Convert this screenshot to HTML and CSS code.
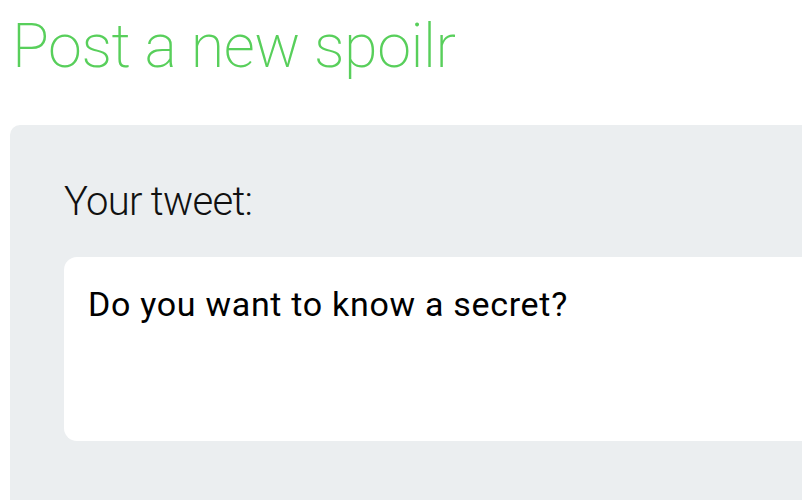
FILE: index.html
```html
<!DOCTYPE html>
<html lang="en">
<head>
<meta charset="utf-8">
<title>Post a new spoilr</title>
<link rel="stylesheet" href="styles.css">
</head>
<body>
  <h1 class="title">Post a new spoilr</h1>
  <form class="panel">
    <label class="label" for="tweet">Your tweet:</label>
    <div class="tweet" id="tweet">Do you want to know a secret?</div>
  </form>
</body>
</html>
```

FILE: styles.css
```css
html, body {
  margin: 0;
  padding: 0;
  overflow: hidden;
  background: #ffffff;
}

body {
  width: 802px;
  height: 500px;
  padding-left: 10px;
  box-sizing: border-box;
  font-family: Roboto, "Liberation Sans", sans-serif;
}

.title {
  margin: 10px 0 43px 0;
  padding-left: 2px;
  font-size: 61px;
  font-weight: 200;
  line-height: normal;
  letter-spacing: -0.5px;
  color: #58cf5b;
}

.panel {
  display: flex;
  flex-direction: column;
  align-items: flex-start;
  width: 1000px;
  height: 400px;
  padding: 53px 0 0 54px;
  box-sizing: border-box;
  background: #ebeef0;
  border-radius: 10px 0 0 0;
}

.label {
  font-size: 40px;
  font-weight: 300;
  line-height: normal;
  letter-spacing: -0.7px;
  color: #111111;
  margin-bottom: 32px;
}

.tweet {
  width: 900px;
  height: 184px;
  box-sizing: border-box;
  padding: 27px 24px;
  background: #ffffff;
  border-radius: 13px;
  font-size: 34px;
  font-weight: 400;
  line-height: normal;
  letter-spacing: 0.7px;
  color: #000000;
}
```
